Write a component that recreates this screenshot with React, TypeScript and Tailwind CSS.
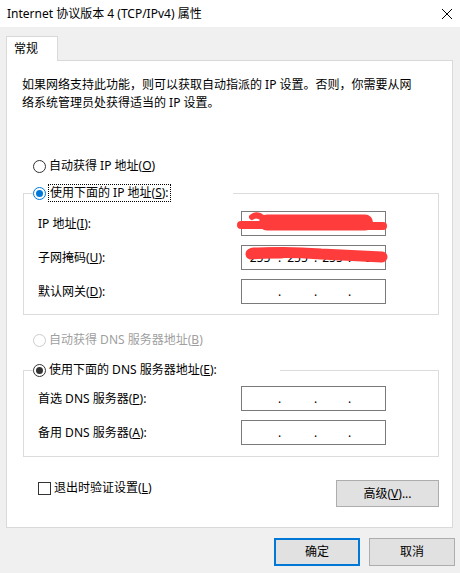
import React from "react";

const font = "font-['Noto_Sans','Noto_Sans_CJK_SC',sans-serif]";

type RadioState = "off" | "focus" | "on" | "disabled";

const Radio = ({ state }: { state: RadioState }) => {
  const ring =
    state === "focus"
      ? "border-[#0078d7]"
      : state === "disabled"
      ? "border-[#cccccc]"
      : "border-[#333333]";
  return (
    <span
      className={`flex h-[13px] w-[13px] shrink-0 items-center justify-center rounded-full border bg-white ${ring}`}
    >
      {state === "focus" && <span className="h-[7px] w-[7px] rounded-full bg-[#0078d7]" />}
      {state === "on" && <span className="h-[7px] w-[7px] rounded-full bg-[#333333]" />}
    </span>
  );
};

// Windows-style IP address box: four fields split by dots
const IpBox = ({ parts, scribble }: { parts?: string[]; scribble?: React.ReactNode }) => {
  const p = parts ?? ["", "", "", ""];
  return (
    <div className="relative flex h-[25px] w-[145px] items-center border border-[#7a7a7a] bg-white text-[12px] leading-[18px]">
      <span className="w-[36px] text-center">{p[0]}</span>
      <span className="w-[3px] text-center">.</span>
      <span className="w-[33px] text-center">{p[1]}</span>
      <span className="w-[3px] text-center">.</span>
      <span className="w-[31px] text-center">{p[2]}</span>
      <span className="w-[3px] text-center">.</span>
      <span className="flex-1 text-center">{p[3]}</span>
      {scribble && (
        <svg
          className="pointer-events-none absolute left-[-1px] top-[-1px] overflow-visible"
          width="145"
          height="25"
          fill="none"
          stroke="#ff3c3c"
          strokeLinecap="round"
          strokeLinejoin="round"
        >
          {scribble}
        </svg>
      )}
    </div>
  );
};

const FieldRow = ({ label, children }: { label: React.ReactNode; children: React.ReactNode }) => (
  <div className="flex h-[25px] items-center pl-[5px]">
    <span className="w-[203px] text-[12px] leading-[18px]">{label}</span>
    {children}
  </div>
);

const Btn = ({ children, primary, className = "" }: { children: React.ReactNode; primary?: boolean; className?: string }) => (
  <div
    className={`flex items-center justify-center bg-[#e1e1e1] text-[12px] ${
      primary ? "border-2 border-[#0078d7]" : "border border-[#adadad]"
    } ${className}`}
  >
    {children}
  </div>
);

export default function App() {
  return (
    <div className={`flex h-[573px] w-[460px] flex-col bg-[#f0f0f0] text-black ${font}`}>
      {/* title bar */}
      <div className="flex h-[27px] items-center justify-between bg-white pl-[7px] pr-[8px]">
        <span className="text-[12px] leading-[18px]">Internet 协议版本 4 (TCP/IPv4) 属性</span>
        <svg width="10" height="10" viewBox="0 0 10 10" stroke="#000" strokeWidth="1">
          <path d="M0 0 L10 10 M10 0 L0 10" />
        </svg>
      </div>

      <div className="pl-[6px] pr-[7px] pt-[9px]">
        {/* tab */}
        <div className="relative z-10 -mb-px flex h-[25px] w-[52px] items-center border border-b-0 border-[#d9d9d9] bg-white pl-[7px] text-[12px]">
          常规
        </div>

        {/* panel */}
        <div className="flex h-[468px] flex-col border border-[#d9d9d9] bg-white">
          <div className="mt-[15px] pl-[15px] text-[12px] leading-[18px] whitespace-nowrap">
            <div>如果网络支持此功能，则可以获取自动指派的 IP 设置。否则，你需要从网</div>
            <div>络系统管理员处获得适当的 IP 设置。</div>
          </div>

          <div className="mt-[45px] flex h-[18px] items-center gap-[3px] pl-[26px] text-[12px]">
            <Radio state="off" />
            <span>
              自动获得 IP 地址(<u>O</u>)
            </span>
          </div>

          <fieldset className="ml-[16px] mt-[9px] w-[416px] border border-[#dcdcdc] pb-[10px] pl-[9px] pt-[9px]">
            <legend className="flex h-[18px] w-[200px] items-center gap-[2px] text-[12px]">
              <Radio state="focus" />
              <span className="flex h-[18px] items-center border border-dotted border-black px-px">
                使用下面的 IP 地址(<u>S</u>):
              </span>
            </legend>
            <div className="flex flex-col gap-[9px]">
              <FieldRow label={<>IP 地址(<u>I</u>):</>}>
                <IpBox
                  scribble={
                    <>
                      <path d="M0 14 L20 14" strokeWidth="8" />
                      <path d="M11 6 Q16 2 23 8" strokeWidth="6" />
                      <path d="M26 11.5 L124 11.5" strokeWidth="16" />
                      <path d="M118 15 L142 15" strokeWidth="8" />
                    </>
                  }
                />
              </FieldRow>
              <FieldRow label={<>子网掩码(<u>U</u>):</>}>
                <IpBox
                  parts={["255", "255", "255", "0"]}
                  scribble={
                    <>
                      <path d="M10 9 Q40 6 80 9 L141 12" strokeWidth="11" />
                      <path d="M12 8 L40 8" strokeWidth="11" />
                    </>
                  }
                />
              </FieldRow>
              <FieldRow label={<>默认网关(<u>D</u>):</>}>
                <IpBox />
              </FieldRow>
            </div>
          </fieldset>

          <div className="mt-[16px] flex h-[18px] items-center gap-[3px] pl-[26px] text-[12px] text-[#a0a0a0]">
            <Radio state="disabled" />
            <span>
              自动获得 DNS 服务器地址(<u>B</u>)
            </span>
          </div>

          <fieldset className="ml-[16px] mt-[12px] w-[416px] border border-[#dcdcdc] pb-[11px] pl-[9px] pt-[7px]">
            <legend className="flex h-[18px] w-[247px] items-center gap-[3px] text-[12px]">
              <Radio state="on" />
              <span>
                使用下面的 DNS 服务器地址(<u>E</u>):
              </span>
            </legend>
            <div className="flex flex-col gap-[9px]">
              <FieldRow label={<>首选 DNS 服务器(<u>P</u>):</>}>
                <IpBox />
              </FieldRow>
              <FieldRow label={<>备用 DNS 服务器(<u>A</u>):</>}>
                <IpBox />
              </FieldRow>
            </div>
          </fieldset>

          <div className="mt-[22px] flex items-start pl-[31px] pr-[13px]">
            <div className="flex h-[18px] items-center gap-[3px] text-[12px]">
              <span className="h-[13px] w-[13px] border border-[#333333] bg-white" />
              <span>
                退出时验证设置(<u>L</u>)
              </span>
            </div>
            <Btn className="ml-auto mt-px h-[27px] w-[103px]">
              高级(<u>V</u>)...
            </Btn>
          </div>
        </div>
      </div>

      {/* dialog buttons */}
      <div className="mt-[10px] flex justify-end gap-[9px] pr-[5px]">
        <Btn primary className="h-[28px] w-[86px]">
          确定
        </Btn>
        <Btn className="h-[28px] w-[86px]">取消</Btn>
      </div>
    </div>
  );
}
